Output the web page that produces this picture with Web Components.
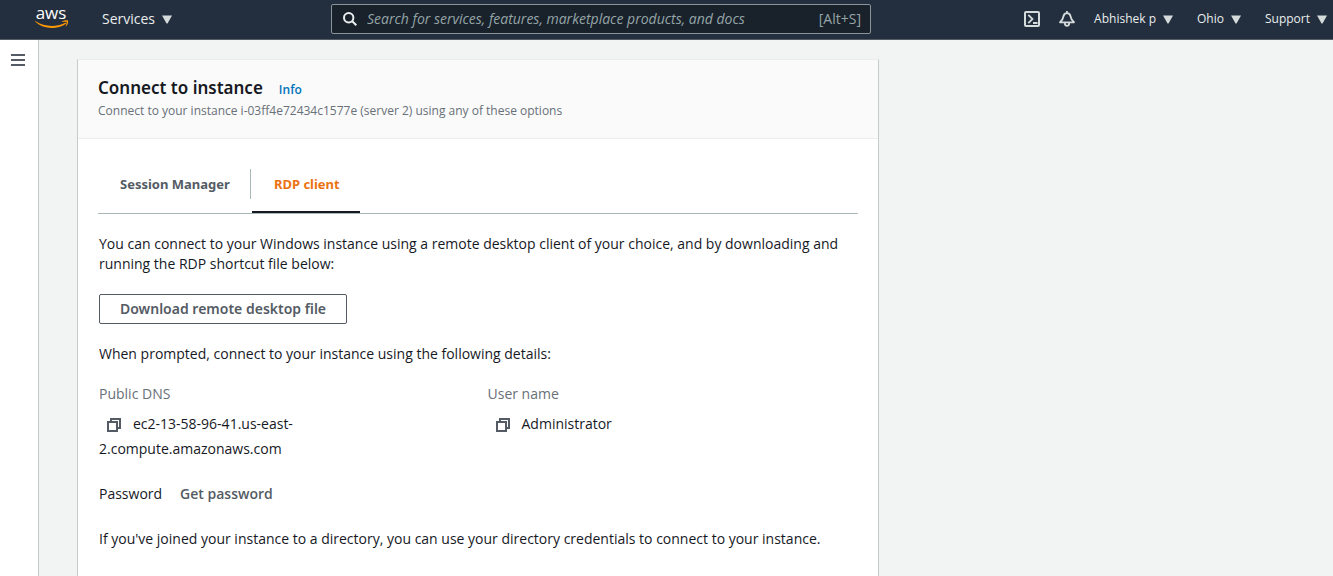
<!DOCTYPE html>
<html lang="en">
<head>
<meta charset="utf-8">
<meta name="viewport" content="width=device-width, initial-scale=1">
<title>Connect to instance | EC2 Management Console</title>
<style>
  html, body { margin: 0; }
  body {
    background: #f2f3f3;
    color: #16191f;
    font: 14px/20px "Open Sans", "Noto Sans", sans-serif;
  }
</style>
</head>
<body>
<console-page>
  <console-header slot="header"></console-header>
  <nav-rail slot="nav"></nav-rail>
  <console-card>
    <h1 slot="title">Connect to instance</h1>
    <info-link slot="info"></info-link>
    <span slot="description">Connect to your instance i-03ff4e72434c1577e (server 2) using any of these options</span>
    <rdp-panel></rdp-panel>
  </console-card>
</console-page>

<script>
const define = (name, html) => {
  const template = document.createElement('template');
  template.innerHTML = html;
  customElements.define(name, class extends HTMLElement {
    constructor() {
      super();
      this.attachShadow({ mode: 'open' }).append(template.content.cloneNode(true));
    }
  });
};

define('console-page', `
<style>
  :host { display: flex; flex-direction: column; height: 100vh; overflow: hidden; }
  .body { display: flex; flex: 1; min-height: 0; }
  main { flex: 1; min-width: 0; display: flex; overflow: hidden; padding: 19px 38px 0; }
</style>
<slot name="header"></slot>
<div class="body"><slot name="nav"></slot><main><slot></slot></main></div>`);

define('aws-logo', `
<style>
  :host { display: block; }
  a { display: block; }
  svg { display: block; overflow: visible; }
  text { font: 500 17px "Open Sans", "Noto Sans", sans-serif; fill: #fff; }
</style>
<a href="#" aria-label="AWS home">
<svg width="34" height="30" viewBox="0 0 34 30">
  <text x="16" y="15" text-anchor="middle">aws</text>
  <g transform="translate(0 1)" fill="#f90">
    <path d="M.6 16.300C9 21.800 20.500 22.600 30.300 17.800c.7-.3 1.200.4.6.9C22 25 8.500 24.500.2 16.800c-.3-.3 0-.7.4-.5z"/>
    <path d="M27 16.300c2-1.300 5.500-1.400 6-.8s0 4.200-1.900 5.800c-.3.2-.6.1-.4-.3.4-1 1.300-3.400.9-4-.4-.5-2.800-.3-3.900-.100-.9 0-.9-.4-.7-.6z"/>
  </g>
</svg></a>`);

define('menu-button', `
<style>
  :host { display: block; }
  button { display: flex; align-items: center; gap: 7px; padding: 0; border: 0; background: none;
           color: #eaeded; font: inherit; line-height: 20px; white-space: nowrap; }
  svg { display: block; }
</style>
<button type="button"><slot></slot>
<svg width="10" height="9" viewBox="0 0 10 9" aria-hidden="true"><path d="M0 .5h10L5.500 8.500h-1z" fill="#d5dbdb"/></svg></button>`);

define('service-search', `
<style>
  :host { display: block; }
  form { display: flex; align-items: center; box-sizing: border-box; height: 30px; gap: 10px;
         padding: 0 9px 0 11px; border: 1px solid #879596; border-radius: 2px; background: #19212b; color: #95a5a6; }
  svg { flex: none; }
  input { flex: 1; min-width: 0; padding: 0; border: 0; outline: 0; background: none; color: #fff; font: inherit; }
  input::placeholder { color: #95a5a6; font-style: italic; opacity: 1; }
</style>
<form role="search">
  <svg width="14" height="14" viewBox="0 0 14 14" fill="none" stroke="#eaeded" stroke-width="2" aria-hidden="true"><circle cx="5.700" cy="5.700" r="4.700"/><path d="M9 9l4.300 4.300"/></svg>
  <input type="text" aria-label="Search" placeholder="Search for services, features, marketplace products, and docs">
  <span>[Alt+S]</span>
</form>`);

define('console-header', `
<style>
  :host { display: grid; grid-template-columns: 331fr 540fr 462fr; align-items: center; flex: none;
          box-sizing: border-box; height: 40px; padding-bottom: 1px; border-bottom: 1px solid #545b64; background: #232f3e; color: #eaeded; font-size: 14px; }
  .left { display: flex; align-items: center; gap: 33px; padding-left: 35px; }
  .right { display: flex; align-items: center; justify-content: flex-end; padding-right: 6px; font-size: 12px; }
  .icon { display: block; padding: 0; border: 0; background: none; margin-right: 19px; }
  .icon svg { display: block; }
  .menus { display: flex; gap: 24px; }
</style>
<div class="left"><aws-logo></aws-logo><menu-button>Services</menu-button></div>
<service-search></service-search>
<div class="right">
  <button class="icon" type="button" aria-label="CloudShell"><svg width="16" height="16" viewBox="0 0 16 16" fill="none" stroke="#d5dbdb" stroke-width="2"><rect x="1" y="1" width="14" height="14" rx="1"/><path d="M4.300 3.800L8.500 8l-4.200 4.200M9 12h4.500" stroke-width="1.800"/></svg></button>
  <button class="icon" type="button" aria-label="Notifications"><svg width="16" height="16" viewBox="0 0 16 16" fill="none" stroke="#d5dbdb" stroke-width="1.800" stroke-linejoin="round"><path d="M8 0v2M1 11.300C3.500 9.500 4 7.700 4.400 5.500 4.800 3.300 6 2.100 8 2.100s3.200 1.200 3.600 3.400c.4 2.200.9 4 3.400 5.800zM5.800 12c0 3.800 4.400 3.800 4.400 0"/></svg></button>
  <div class="menus"><menu-button>Abhishek p</menu-button><menu-button>Ohio</menu-button><menu-button>Support</menu-button></div>
</div>`);

define('nav-rail', `
<style>
  :host { display: block; flex: none; width: 38px; background: #fff; border-right: 1px solid #c4cccc; }
  button { display: block; margin: 13px 0 0 11px; padding: 0; border: 0; background: none; }
  svg { display: block; }
</style>
<button type="button" aria-label="Open navigation"><svg width="14" height="14" viewBox="0 0 14 14" fill="#545b64"><path d="M0 1h14v2H0zM0 6h14v2H0zM0 11h14v2H0z"/></svg></button>`);

define('info-link', `
<style>
  :host { display: block; }
  a { color: #0073bb; font-size: 12px; font-weight: 600; text-decoration: none; }
</style>
<a href="#">Info</a>`);

define('console-card', `
<style>
  :host { display: block; flex: 1; min-width: 0; max-width: 800px; background: #fff; border: 1px solid #c4cccc; border-top-color: #eaeded; border-bottom: 0; }
  header { box-sizing: border-box; height: 79px; padding: 17px 20px 0; background: #fafafa; border-bottom: 1px solid #eaeded; }
  .title { display: flex; align-items: baseline; gap: 16px; }
  ::slotted(h1) { margin: 0; font: 600 17px/22px "Noto Sans", "Open Sans", sans-serif; }
  .description { color: #687078; font-size: 12px; line-height: 22px; white-space: nowrap; }
  section { padding: 18px 20px 0; }
</style>
<header>
  <div class="title"><slot name="title"></slot><slot name="info"></slot></div>
  <div class="description"><slot name="description"></slot></div>
</header>
<section><slot></slot></section>`);

define('connect-tabs', `
<style>
  :host { display: block; }
  nav { display: flex; border-bottom: 1px solid #aab7b8; }
  button { box-sizing: border-box; height: 56px; padding: 0 20px 2px 22px; border: 0; background: none;
           color: #545b64; font: 700 13px/20px "Noto Sans", "Open Sans", sans-serif; white-space: nowrap; }
  .divider { width: 1px; height: 30px; margin: 12px 1px 0 0; background: #aab7b8; }
  .active { padding-bottom: 0; color: #ec7211; border-bottom: 2px solid #16191f; }
</style>
<nav role="tablist">
  <button type="button" role="tab" aria-selected="false">Session Manager</button>
  <span class="divider"></span>
  <button class="active" type="button" role="tab" aria-selected="true">RDP client</button>
</nav>`);

define('copy-field', `
<style>
  :host { display: block; }
  .label { color: #687078; }
  .value { margin-top: 7px; line-height: 25px; white-space: nowrap; }
  button { padding: 0; margin: 0 12px 0 8px; border: 0; background: none; vertical-align: middle; line-height: 14px; }
  svg { display: block; }
</style>
<div class="label"><slot name="label"></slot></div>
<div class="value"><button type="button" aria-label="Copy"><svg width="14" height="14" viewBox="0 0 14 14" fill="none" stroke="#545b64" stroke-width="2"><path d="M1 4h9v9H1zM4 4V1h9v9h-3"/></svg></button><slot></slot></div>`);

define('rdp-panel', `
<style>
  :host { display: block; }
  .content { padding: 20px 0 0 1px; }
  p { margin: 0 0 20px; }
  .download { display: block; height: 30px; margin-bottom: 20px; padding: 0 20px; border: 1px solid #545b64; border-radius: 2px;
              background: #fff; color: #545b64; font: 600 14px/20px "Noto Sans", "Open Sans", sans-serif; }
  .details { display: grid; grid-template-columns: 1fr 1fr; gap: 18px; margin-bottom: 23px; }
  .password { display: flex; gap: 18px; margin-bottom: 25px; }
  .password a { color: #545b64; font-weight: 600; text-decoration: none; }
</style>
<connect-tabs></connect-tabs>
<div class="content">
  <p>You can connect to your Windows instance using a remote desktop client of your choice, and by downloading and<br>running the RDP shortcut file below:</p>
  <button class="download" type="button">Download remote desktop file</button>
  <p>When prompted, connect to your instance using the following details:</p>
  <div class="details">
    <copy-field><span slot="label">Public DNS</span>ec2-13-58-96-41.us-east-<br>2.compute.amazonaws.com</copy-field>
    <copy-field><span slot="label">User name</span>Administrator</copy-field>
  </div>
  <div class="password"><span>Password</span><a href="#">Get password</a></div>
  <p>If you've joined your instance to a directory, you can use your directory credentials to connect to your instance.</p>
</div>`);
</script>
</body>
</html>
